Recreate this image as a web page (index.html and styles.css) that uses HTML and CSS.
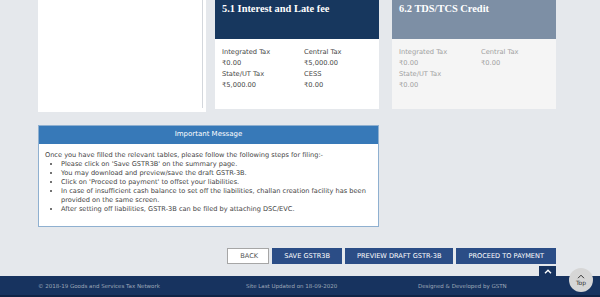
FILE: index.html
```html
<!DOCTYPE html>
<html lang="en">
<head>
    <meta charset="UTF-8">
    <meta name="viewport" content="width=device-width, initial-scale=1.0">
    <title>GSTR-3B Summary</title>
    <link rel="stylesheet" href="styles.css">
</head>
<body>

<div class="page">
    <div class="cards">
        <div class="card card-blank">
            <div class="pane"></div>
        </div>

        <div class="card tile">
            <div class="tile-head">5.1 Interest and Late fee</div>
            <div class="tile-body">
                <div class="cell"><span>Integrated Tax</span><span>₹0.00</span></div>
                <div class="cell"><span>Central Tax</span><span>₹5,000.00</span></div>
                <div class="cell"><span>State/UT Tax</span><span>₹5,000.00</span></div>
                <div class="cell"><span>CESS</span><span>₹0.00</span></div>
            </div>
        </div>

        <div class="card tile muted">
            <div class="tile-head">6.2 TDS/TCS Credit</div>
            <div class="tile-body">
                <div class="cell"><span>Integrated Tax</span><span>₹0.00</span></div>
                <div class="cell"><span>Central Tax</span><span>₹0.00</span></div>
                <div class="cell"><span>State/UT Tax</span><span>₹0.00</span></div>
            </div>
        </div>
    </div>

    <div class="notice">
        <div class="notice-head">Important Message</div>
        <div class="notice-body">
            <p>Once you have filled the relevant tables, please follow the following steps for filing:-</p>
            <ul>
                <li>Please click on 'Save GSTR3B' on the summary page.</li>
                <li>You may download and preview/save the draft GSTR-3B.</li>
                <li>Click on 'Proceed to payment' to offset your liabilities.</li>
                <li>In case of insufficient cash balance to set off the liabilities, challan creation facility has been provided on the same screen.</li>
                <li>After setting off liabilities, GSTR-3B can be filed by attaching DSC/EVC.</li>
            </ul>
        </div>
    </div>

    <div class="actions">
        <button class="btn btn-back">BACK</button>
        <button class="btn">SAVE GSTR3B</button>
        <button class="btn">PREVIEW DRAFT GSTR-3B</button>
        <button class="btn">PROCEED TO PAYMENT</button>
    </div>
</div>

<footer>
    <div class="footer-tab">
        <svg width="8" height="5" viewBox="0 0 8 5"><path d="M1 4.2 L4 1.2 L7 4.2" fill="none" stroke="#fff" stroke-width="1.4"/></svg>
    </div>
    <div class="footer-inner">
        <span>© 2018-19 Goods and Services Tax Network</span>
        <span>Site Last Updated on 18-09-2020</span>
        <span>Designed &amp; Developed by GSTN</span>
    </div>
    <div class="footer-strip"></div>
    <div class="top-btn">
        <svg width="8" height="5" viewBox="0 0 8 5"><path d="M1 4.2 L4 1.2 L7 4.2" fill="none" stroke="#333" stroke-width="1"/></svg>
        <span>Top</span>
    </div>
</footer>

</body>
</html>
```

FILE: styles.css
```css
body {
    margin: 0;
    background-color: #e5e8ec;
    font-family: "DejaVu Sans", Verdana, sans-serif;
    color: #444;
    height: 297px;
    overflow: hidden;
    display: flex;
    flex-direction: column;
}
.page {
    width: 518px;
    margin-left: 38px;
    flex: 1;
}
.cards {
    display: flex;
    align-items: flex-start;
}
.card {
    background-color: #ffffff;
}
.card-blank {
    width: 165px;
    height: 108px;
    padding: 0 3px 4px 0;
    margin-right: 9px;
}
.pane {
    height: 100%;
    border-right: 1px solid #d3d7dc;
}
.tile {
    width: 164px;
    height: 109px;
}
.tile + .tile {
    margin-left: 13px;
}
.tile-head {
    background-color: #17375e;
    color: #ffffff;
    height: 39px;
    box-sizing: border-box;
    padding: 3px 7px 0;
    font-family: "Liberation Serif", serif;
    font-weight: bold;
    font-size: 10.4px;
}
.tile-body {
    display: grid;
    grid-template-columns: 82px 1fr;
    padding: 8px 7px 0;
}
.cell {
    display: flex;
    flex-direction: column;
    font-size: 6.7px;
    line-height: 11px;
}
.muted .tile-head {
    background-color: #7d8fa5;
}
.muted {
    background-color: #f5f5f5;
}
.muted .cell {
    color: #a0a0a0;
}
.notice {
    width: 339px;
    margin-top: 13px;
    border: 1px solid #8fb0d0;
    background-color: #ffffff;
    height: 100px;
}
.notice-head {
    background-color: #3779b8;
    color: #ffffff;
    text-align: center;
    font-size: 7px;
    height: 18px;
    line-height: 17px;
}
.notice-body {
    padding: 7px 6px 0;
    font-size: 6.6px;
    line-height: 9px;
}
.notice-body p {
    margin: 0;
}
.notice-body ul {
    margin: 0;
    padding-left: 16px;
}
.actions {
    display: flex;
    justify-content: flex-end;
    gap: 3px;
    margin-top: 21px;
}
.btn {
    height: 16px;
    border: none;
    padding: 0 12px;
    background-color: #2b4d86;
    color: #ffffff;
    font-family: "DejaVu Sans", Verdana, sans-serif;
    font-size: 6.6px;
}
.btn-back {
    background-color: #ffffff;
    color: #555;
    border: 1px solid #a6a6a6;
    width: 42px;
}
footer {
    position: relative;
    background-color: #17335f;
    height: 21px;
    color: #9ea8b8;
    font-size: 5.5px;
}
.footer-tab {
    position: absolute;
    left: 539px;
    top: -10px;
    width: 17px;
    height: 10px;
    background-color: #17335f;
    display: flex;
    justify-content: center;
    align-items: center;
}
.footer-inner {
    margin-left: 38px;
    display: grid;
    grid-template-columns: 208px 172px 1fr;
    line-height: 21px;
}
.footer-strip {
    position: absolute;
    left: 0;
    right: 0;
    bottom: 0;
    height: 2px;
    background-color: #0f2447;
}
.top-btn {
    position: absolute;
    left: 569px;
    top: -8px;
    width: 24px;
    height: 24px;
    border-radius: 50%;
    background-color: #d6d6d6;
    color: #333;
    display: flex;
    flex-direction: column;
    align-items: center;
    justify-content: center;
    font-size: 6px;
    line-height: 7px;
}
```
